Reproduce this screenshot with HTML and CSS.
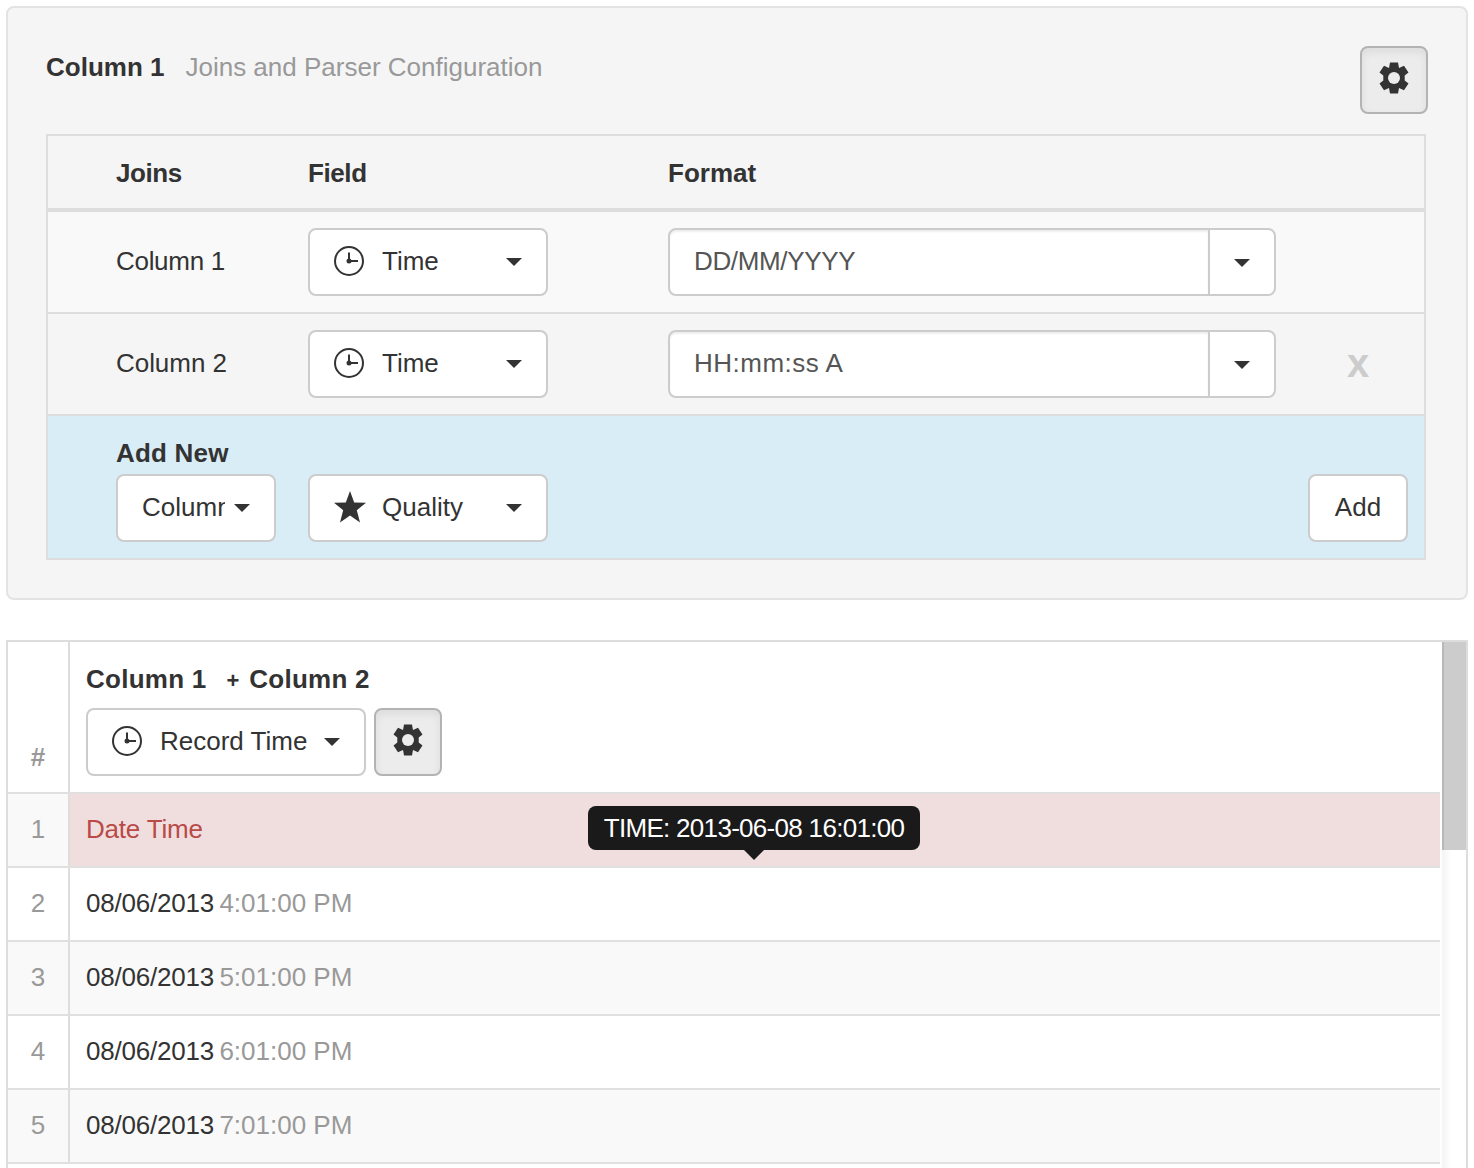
FILE: index.html
```html
<!DOCTYPE html>
<html lang="en">
<head>
<meta charset="utf-8">
<title>Column configuration</title>
<link rel="stylesheet" href="styles.css">
</head>
<body>
<svg class="sprite" aria-hidden="true">
  <defs>
    <symbol id="clock" viewBox="0 0 30 30">
      <circle cx="15" cy="15" r="14" fill="none" stroke="#333" stroke-width="2"/>
      <path d="M15 6.500V15H24" fill="none" stroke="#333" stroke-width="2"/>
      <circle cx="15" cy="15" r="2.500" fill="#333"/>
    </symbol>
    <symbol id="star" viewBox="0 0 32 32">
      <path d="M16 0L20.200 11.400L32 11.800L22.800 19.200L26 31.500L16 24.500L6 31.500L9.200 19.200L0 11.800L11.800 11.400Z" fill="#333"/>
    </symbol>
    <symbol id="gear" viewBox="0 0 32 32">
      <path d="M12 0.500H20L21 6L26 3.800L30.500 10.500L26.700 13.500V18.500L30.500 21.500L26 28.200L21 26L20 31.500H12L11 26L6 28.200L1.500 21.500L5.300 18.500V13.500L1.500 10.500L6 3.800L11 6Z" fill="#333"/>
      <circle cx="16" cy="16" r="6" fill="#ececec"/>
    </symbol>
  </defs>
</svg>

<section class="panel">
  <header class="panel-head">
    <h2 class="panel-title"><b>Column 1</b><span class="muted">Joins and Parser Configuration</span></h2>
    <button class="btn btn-gear"><svg class="ico-gear"><use href="#gear"/></svg></button>
  </header>
  <div class="joins">
    <div class="jrow jhead">
      <span class="tight">Joins</span><span class="tight">Field</span><span>Format</span>
    </div>
    <div class="jrow jrow-odd">
      <span class="jlabel jlabel-1">Column 1</span>
      <button class="btn btn-select"><svg class="ico"><use href="#clock"/></svg><span class="btn-label">Time</span><i class="caret"></i></button>
      <div class="combo"><div class="combo-input fmt-date">DD/MM/YYYY</div><div class="combo-btn"><i class="caret"></i></div></div>
    </div>
    <div class="jrow jrow-even">
      <span class="jlabel">Column 2</span>
      <button class="btn btn-select"><svg class="ico"><use href="#clock"/></svg><span class="btn-label">Time</span><i class="caret"></i></button>
      <div class="combo"><div class="combo-input fmt-time">HH:mm:ss A</div><div class="combo-btn"><i class="caret"></i></div></div>
      <span class="remove">x</span>
    </div>
    <div class="jadd">
      <strong class="jadd-title">Add New</strong>
      <div class="jadd-controls">
        <button class="btn btn-col"><span class="clip">Column</span><i class="caret"></i></button>
        <button class="btn btn-select"><svg class="ico-star"><use href="#star"/></svg><span class="btn-label label-star">Quality</span><i class="caret"></i></button>
        <button class="btn btn-add">Add</button>
      </div>
    </div>
  </div>
</section>

<section class="grid">
  <div class="grid-body">
    <div class="row row-head">
      <div class="num num-head">#</div>
      <div class="cell cell-head">
        <div class="head-title"><b>Column 1</b><span class="plus">+</span><b>Column 2</b></div>
        <div class="head-controls">
          <button class="btn btn-record"><svg class="ico"><use href="#clock"/></svg><span class="btn-label">Record Time</span><i class="caret"></i></button>
          <button class="btn btn-gear"><svg class="ico-gear"><use href="#gear"/></svg></button>
        </div>
      </div>
    </div>
    <div class="row row-error">
      <div class="num alt">1</div>
      <div class="cell"><span class="err-text">Date Time</span>
        <div class="tooltip">TIME: 2013-06-08 16:01:00</div>
      </div>
    </div>
    <div class="row"><div class="num">2</div><div class="cell"><span class="date">08/06/2013</span> <span class="muted-t">4:01:00 PM</span></div></div>
    <div class="row alt"><div class="num">3</div><div class="cell"><span class="date">08/06/2013</span> <span class="muted-t">5:01:00 PM</span></div></div>
    <div class="row"><div class="num">4</div><div class="cell"><span class="date">08/06/2013</span> <span class="muted-t">6:01:00 PM</span></div></div>
    <div class="row alt"><div class="num">5</div><div class="cell"><span class="date">08/06/2013</span> <span class="muted-t">7:01:00 PM</span></div></div>
  </div>
  <div class="scrollbar"><div class="thumb"></div></div>
</section>
</body>
</html>
```
FILE: styles.css
```css
* { box-sizing: border-box; }
html, body { margin: 0; height: 1168px; overflow: hidden; background: #fff; }
body {
  padding: 6px;
  font-family: "Liberation Sans", Arial, sans-serif;
  font-size: 26px;
  line-height: 40px;
  color: #333;
}
.sprite { display: none; }
button { font: inherit; color: inherit; margin: 0; white-space: nowrap; }

.panel {
  height: 594px;
  padding: 38px;
  background: #f5f5f5;
  border: 2px solid #e3e3e3;
  border-radius: 8px;
}
.panel-head { display: flex; justify-content: space-between; height: 88px; }
.panel-title { margin: 0; padding-top: 1px; font-size: 26px; font-weight: 400; line-height: 40px; }
.panel-title b { margin-right: 21px; }
.muted { color: #999; }

.btn {
  display: flex;
  align-items: center;
  height: 68px;
  padding: 0 24px 2px;
  background: #fff;
  border: 2px solid #ccc;
  border-radius: 8px;
}
.btn-gear {
  flex: none;
  width: 68px;
  padding: 0 0 4px;
  justify-content: center;
  background: #ececec;
  border-color: #b3b3b3;
  box-shadow: inset 0 4px 8px rgba(0,0,0,.07);
}
.ico-gear { width: 32px; height: 32px; }
.ico { width: 30px; height: 30px; flex: none; }
.ico-star { width: 32px; height: 32px; flex: none; }
.caret {
  flex: none;
  width: 0; height: 0;
  margin-top: 2px;
  border-top: 8px solid #333;
  border-left: 8px solid transparent;
  border-right: 8px solid transparent;
}
.btn-label { margin-left: 18px; }
.label-star { margin-left: 16px; }
.btn-select { width: 240px; }
.btn-select .caret { margin-left: auto; }

.joins { border: 2px solid #ddd; height: 426px; margin-right: 2px; }
.jrow {
  display: grid;
  grid-template-columns: 192px 360px 608px 1fr;
  align-items: center;
  padding-left: 68px;
  height: 102px;
  border-bottom: 2px solid #ddd;
}
.jhead { height: 76px; padding-top: 2px; border-bottom-width: 4px; font-weight: 700; background: #f5f5f5; }
.tight { letter-spacing: -.4px; }
.jrow-odd { background: #f9f9f9; }
.jrow-even { background: #f5f5f5; }
.jlabel { margin-bottom: 2px; letter-spacing: -.05px; }
.jlabel-1 { letter-spacing: -.3px; }
.combo { display: flex; width: 608px; height: 68px; background: #fff; border: 2px solid #ccc; border-radius: 8px; }
.combo-input {
  flex: 1;
  padding: 0 24px;
  line-height: 62px;
  color: #555;
  border-radius: 6px 0 0 6px;
  box-shadow: inset 0 2px 2px rgba(0,0,0,.07);
}
.fmt-date { letter-spacing: -.35px; }
.fmt-time { letter-spacing: .5px; }
.combo-btn {
  width: 66px;
  display: flex;
  align-items: center;
  justify-content: center;
  border-left: 2px solid #ccc;
}
.remove {
  justify-self: center;
  margin-left: 16px;
  margin-bottom: 2px;
  font-size: 40px;
  font-weight: 700;
  color: #ccc;
}
.jadd { height: 142px; padding: 16px 16px 0 68px; background: #d9edf7; }
.jadd-title { display: block; height: 42px; line-height: 42px; letter-spacing: .2px; }
.jadd-controls { display: flex; gap: 32px; }
.btn-col { width: 160px; }
.clip { width: 83px; overflow: hidden; text-align: left; }
.btn-col .caret { margin-left: 9px; }
.btn-add { width: 100px; margin-left: auto; justify-content: center; padding: 0 0 2px; }

.grid {
  position: relative;
  display: flex;
  height: 600px;
  margin-top: 40px;
  border: 2px solid #ddd;
  border-bottom: 0;
}
.grid-body { width: 1432px; }
.row { display: grid; grid-template-columns: 62px 1fr; height: 74px; border-bottom: 2px solid #e0e0e0; }
.num { display: flex; align-items: center; justify-content: center; padding-bottom: 2px; color: #999; border-right: 2px solid #ddd; }
.cell { position: relative; padding: 0 16px; line-height: 70px; }
.alt { background: #f9f9f9; }
.row-head { height: 152px; }
.num-head { align-items: flex-end; padding-bottom: 15px; font-weight: 700; }
.cell-head { padding-top: 17px; line-height: 40px; }
.head-title b { letter-spacing: .25px; }
.plus { margin: 0 10px 0 20px; font-weight: 700; font-size: 22px; }
.head-title { height: 49px; }
.head-controls { display: flex; gap: 8px; }
.btn-record { flex: none; width: 280px; padding-right: 20px; }
.btn-record .caret { margin-left: 17px; }
.row-error .cell { background: #f0dede; color: #b94a48; }
.err-text { letter-spacing: -.2px; }
.date { margin-right: -2px; letter-spacing: -.2px; }
.muted-t { color: #999; }
.tooltip {
  position: absolute;
  left: 518px;
  top: 12px;
  width: 332px;
  height: 44px;
  text-align: center;
  background: #1a1a1a;
  border-radius: 8px;
  color: #fff;
  font-size: 26px;
  line-height: 44px;
  letter-spacing: -.7px;
}
.tooltip::after {
  content: "";
  position: absolute;
  left: 156px;
  top: 44px;
  border-top: 10px solid #1a1a1a;
  border-left: 10px solid transparent;
  border-right: 10px solid transparent;
}
.scrollbar {
  width: 24px;
  margin-left: 2px;
  background: linear-gradient(90deg, #f4f4f4, #fff 40%);
}
.thumb { height: 208px; background: #ccc; border-left: 2px solid #b8b8b8; }
```
